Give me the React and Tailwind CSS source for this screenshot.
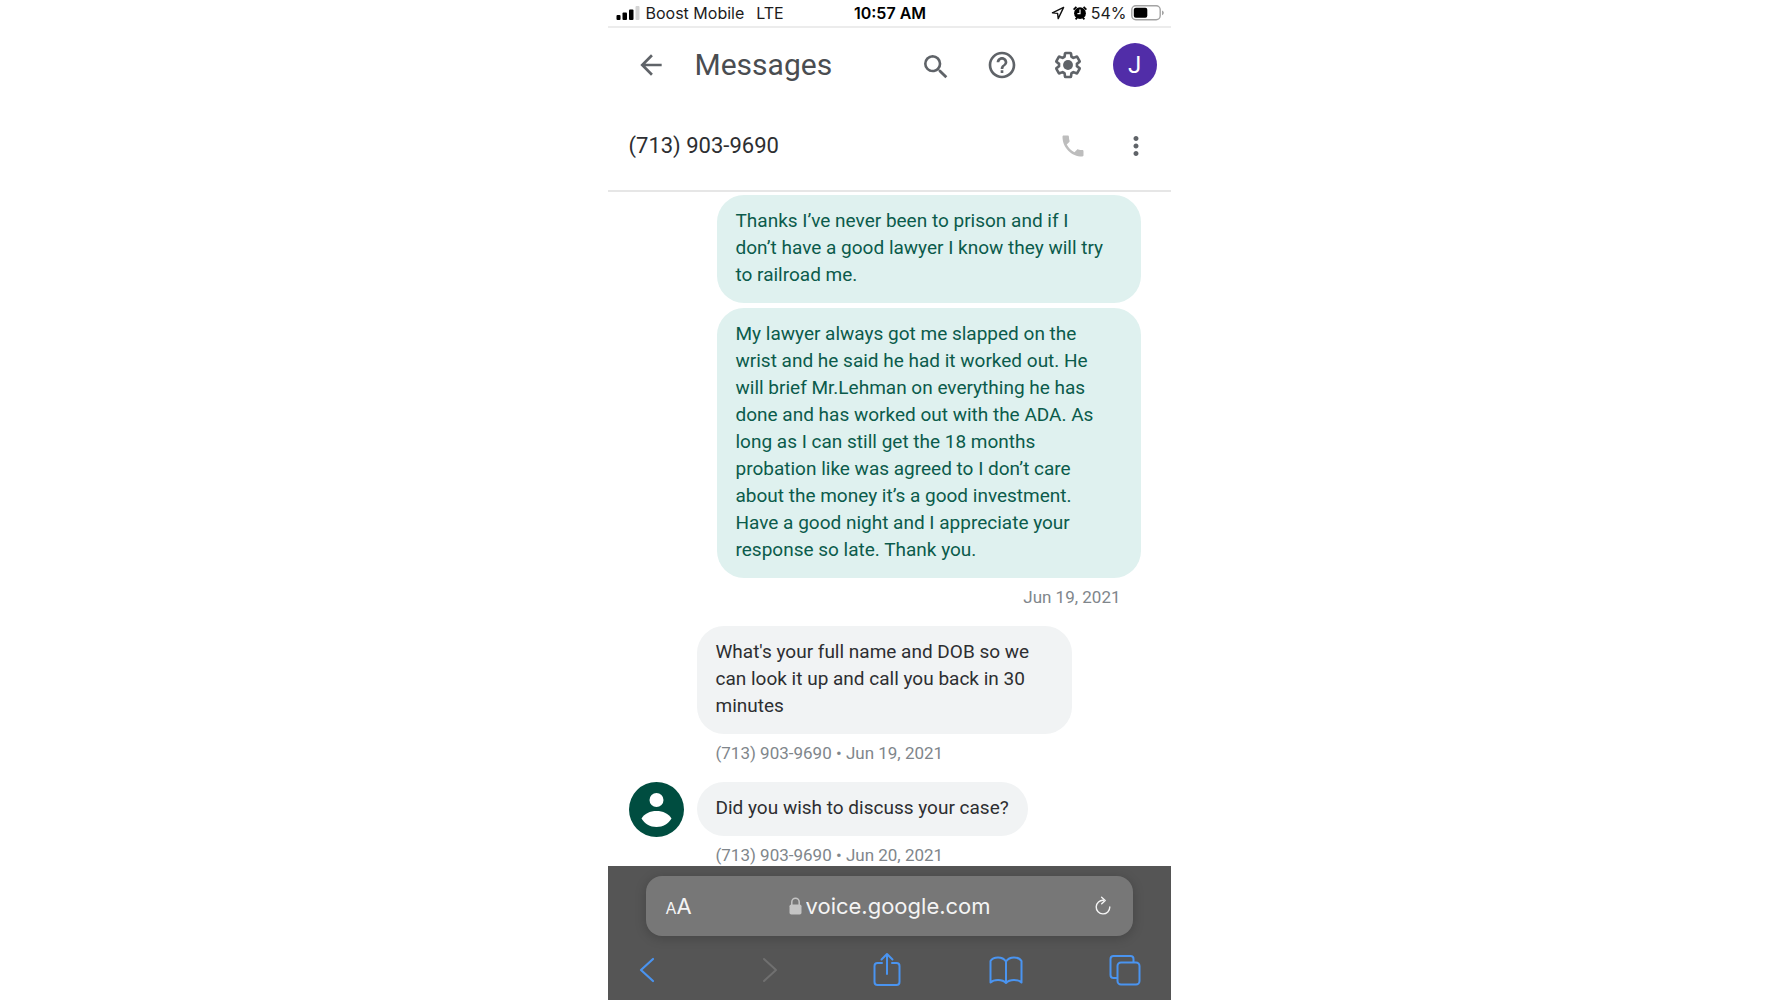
import { useState } from 'react';
import { MdArrowBack, MdSearch, MdHelpOutline, MdPhone, MdMoreVert } from 'react-icons/md';

const CONTACT = '(713) 903-9690';

const messages = [
  {
    id: 1,
    mine: true,
    text: 'Thanks I’ve never been to prison and if I don’t have a good lawyer I know they will try to railroad me.',
  },
  {
    id: 2,
    mine: true,
    text: 'My lawyer always got me slapped on the wrist and he said he had it worked out. He will brief Mr.Lehman on everything he has done and has worked out with the ADA. As long as I can still get the 18 months probation like was agreed to I don’t care about the money it’s a good investment. Have a good night and I appreciate your response so late. Thank you.',
    date: 'Jun 19, 2021',
  },
  {
    id: 3,
    mine: false,
    text: "What's your full name and DOB so we can look it up and call you back in 30 minutes",
    date: 'Jun 19, 2021',
  },
  {
    id: 4,
    mine: false,
    avatar: true,
    text: 'Did you wish to discuss your case?',
    date: 'Jun 20, 2021',
  },
];

function StatusBar() {
  return (
    <div className="grid h-7 shrink-0 grid-cols-[1fr_auto_1fr] items-center border-b-2 border-[#ececec] pl-2 pr-[6px] font-['Inter',sans-serif] text-base leading-none text-[#1c1c1c]">
      <div className="flex items-center">
        <svg className="mr-[6px] h-[14px] w-6" viewBox="0 0 24 14">
          <rect x="0.5" y="9" width="4" height="5" rx="1" fill="#000" />
          <rect x="6.5" y="6.5" width="4.5" height="7.5" rx="1" fill="#000" />
          <rect x="13" y="3.5" width="4.5" height="10.5" rx="1" fill="#000" />
          <rect x="19.5" y="0" width="4" height="14" rx="1" fill="#d4d4d4" />
        </svg>
        <span>Boost Mobile</span>
        <span className="ml-3">LTE</span>
      </div>
      <span className="font-semibold text-black">10:57 AM</span>
      <div className="flex items-center justify-end">
        <svg className="mr-2 h-[14px] w-[14px]" viewBox="0 0 14 14" fill="none" stroke="#111" strokeWidth="1.4" strokeLinejoin="round">
          <path d="M12.6 1.4 1.4 6.8l5.2.6.6 5.2z" />
        </svg>
        <svg className="mr-1 h-[14px] w-[14px]" viewBox="0 0 14 14">
          <circle cx="7" cy="7.2" r="5.9" fill="#000" />
          <path d="M.6 3.6 3.4.9M13.4 3.6 10.6.9M2.6 13.3l1.6-1.8M11.4 13.3l-1.6-1.8" stroke="#000" strokeWidth="1.8" />
          <path d="M7 3.6v4H4.4" stroke="#fff" strokeWidth="1.2" fill="none" />
        </svg>
        <span className="mr-1">54%</span>
        <svg className="h-4 w-[34px]" viewBox="0 0 34 16">
          <rect x="0.8" y="0.8" width="28.4" height="14" rx="4" fill="none" stroke="#a3a3a3" strokeWidth="1.4" />
          <rect x="2.8" y="2.8" width="13.5" height="10" rx="2" fill="#000" />
          <path d="M31 5.4v4.8c1.2-.4 1.8-1.3 1.8-2.4s-.6-2-1.8-2.400z" fill="#a3a3a3" />
        </svg>
      </div>
    </div>
  );
}

function GearIcon() {
  return (
    <svg className="h-8 w-8" viewBox="0 0 24 24">
      <g transform="translate(1.2 1.2) scale(0.9)">
        <path
          fill="none"
          stroke="currentColor"
          strokeWidth="2.2"
          strokeLinejoin="round"
          d="M19.43 12.98c.04-.32.07-.64.07-.98s-.03-.66-.07-.98l2.11-1.65c.19-.15.24-.42.12-.64l-2-3.46a.5.5 0 0 0-.61-.22l-2.49 1c-.52-.4-1.08-.73-1.69-.98l-.38-2.65A.488.488 0 0 0 14 2h-4c-.25 0-.46.18-.49.42l-.38 2.65c-.61.25-1.17.59-1.69.98l-2.49-1a.5.5 0 0 0-.61.22l-2 3.46c-.13.22-.07.49.12.64l2.11 1.65c-.04.32-.07.65-.07.98s.03.66.07.98l-2.11 1.65c-.19.15-.24.42-.12.64l2 3.46a.5.5 0 0 0 .61.22l2.49-1c.52.4 1.08.73 1.69.98l.38 2.65c.03.24.24.42.49.42h4c.25 0 .46-.18.49-.42l.38-2.65c.61-.25 1.17-.59 1.69-.98l2.49 1a.5.5 0 0 0 .61-.22l2-3.46c.12-.22.07-.49-.12-.64z"
        />
      </g>
      <circle cx="12" cy="12" r="3.7" fill="currentColor" />
    </svg>
  );
}

function Header() {
  return (
    <header className="flex h-[74px] shrink-0 items-center pl-[27px] pr-[2px] text-[#5f6368]">
      <button type="button" aria-label="Back" className="mr-7">
        <MdArrowBack className="h-8 w-8" />
      </button>
      <h1 className="flex-1 font-['Roboto',sans-serif] text-[30px] leading-9 text-[#4a4d51]">Messages</h1>
      <button type="button" aria-label="Search" className="flex w-[66px] justify-center pt-1">
        <MdSearch className="h-8 w-8" />
      </button>
      <button type="button" aria-label="Help" className="flex w-[66px] justify-center">
        <MdHelpOutline className="h-8 w-8" />
      </button>
      <button type="button" aria-label="Settings" className="flex w-[66px] justify-center">
        <GearIcon />
      </button>
      <button type="button" aria-label="Account" className="flex w-[68px] justify-center">
        <span className="flex h-11 w-11 items-center justify-center rounded-full bg-[#512da8] font-['Roboto',sans-serif] text-2xl text-white">
          J
        </span>
      </button>
    </header>
  );
}

function ContactBar() {
  return (
    <div className="flex h-[90px] shrink-0 items-center border-b-2 border-[#e6e6e6] pl-[21px] pr-[2px]">
      <h2 className="flex-1 text-[22px] leading-7 text-[#2d2e31]">{CONTACT}</h2>
      <button type="button" aria-label="Call" className="flex w-[60px] justify-center text-[#bdbdbd]" disabled>
        <MdPhone className="h-7 w-7" />
      </button>
      <button type="button" aria-label="More options" className="flex w-[66px] justify-center text-[#5f6368]">
        <MdMoreVert className="h-[30px] w-[30px]" />
      </button>
    </div>
  );
}

function ContactAvatar() {
  return (
    <svg className="h-[55px] w-[55px]" viewBox="0 0 55 55">
      <circle cx="27.5" cy="27.5" r="27.5" fill="#004d40" />
      <circle cx="27.5" cy="18" r="7" fill="#fff" />
      <path d="M12.500 36.500c3-5 8.500-7.500 15-7.500s12 2.500 15 7.500c-3 5-8.500 8.500-15 8.500s-12-3.500-15-8.500z" fill="#fff" />
    </svg>
  );
}

function Message({ message }) {
  const { mine, avatar, text, date } = message;

  if (mine) {
    return (
      <li className="flex flex-col items-end pr-[30px]">
        <p className="max-w-[424px] rounded-[27px] bg-[#dff1ef] pt-3 pr-9 pb-[15px] pl-[19px] text-[19px] leading-[27px] text-[#0b5b4b]">
          {text}
        </p>
        {date && <time className="mt-[7px] mb-3 pr-5 text-[17px] leading-6 text-[#80868b]">{date}</time>}
      </li>
    );
  }

  return (
    <li className="flex pl-[21px]">
      <div className="w-[68px] shrink-0">{avatar && <ContactAvatar />}</div>
      <div className="flex flex-col items-start">
        <p className="max-w-[375px] rounded-[27px] bg-[#f1f3f4] px-[19px] pt-3 pb-[15px] text-[19px] leading-[27px] text-[#2d2e31]">
          {text}
        </p>
        <p className="mt-[7px] mb-3 pl-[19px] text-[17px] leading-6 text-[#80868b]">
          {CONTACT} • <time>{date}</time>
        </p>
      </div>
    </li>
  );
}

function BrowserBar() {
  const [url, setUrl] = useState('voice.google.com');

  return (
    <footer className="shrink-0 bg-[#555] px-[38px] pt-[10px] pb-[10px] font-['Inter',sans-serif]">
      <div className="flex h-[60px] items-center rounded-2xl bg-[#777] px-5 text-[#f4f4f4] shadow-[0_2px_12px_rgba(0,0,0,0.2)]">
        <button type="button" aria-label="Page settings" className="w-10 text-left">
          <span className="text-base">A</span>
          <span className="text-[22px]">A</span>
        </button>
        <div className="flex flex-1 items-center justify-center gap-1">
          <svg className="h-[18px] w-[13px] shrink-0" viewBox="0 0 13 18">
            <rect x="0.5" y="7.5" width="12" height="10" rx="1.8" fill="#c4c4c4" />
            <path d="M2.800 8V5a3.700 3.700 0 0 1 7.400 0v3" fill="none" stroke="#c4c4c4" strokeWidth="1.5" />
          </svg>
          <input
            type="text"
            aria-label="Address"
            value={url}
            onChange={(e) => setUrl(e.target.value)}
            className="w-[184px] bg-transparent text-[22px] leading-7 outline-none"
          />
        </div>
        <button type="button" aria-label="Reload" className="flex w-10 justify-end">
          <svg className="h-5 w-5" viewBox="0 0 20 20" fill="none" stroke="currentColor" strokeWidth="1.4" strokeLinecap="round" strokeLinejoin="round">
            <path d="M10.500 4.300a6.800 6.800 0 1 0 6.300 6.700" />
            <path d="M8.600 1.300l3.600 3.200-3.500 3.300" />
          </svg>
        </button>
      </div>

      <nav className="-mx-2 mt-[14px] flex h-10 items-center justify-between text-[#4a94f0]">
        <button type="button" aria-label="Previous page">
          <svg className="h-9 w-8" viewBox="0 0 32 36" fill="none" stroke="currentColor" strokeWidth="2.2" strokeLinecap="round" strokeLinejoin="round">
            <path d="M15 7 3 18l12 11" />
          </svg>
        </button>
        <button type="button" aria-label="Next page" className="text-[#707070]" disabled>
          <svg className="h-9 w-8" viewBox="0 0 32 36" fill="none" stroke="currentColor" strokeWidth="2" strokeLinecap="round" strokeLinejoin="round">
            <path d="M9 7l12 11L9 29" />
          </svg>
        </button>
        <button type="button" aria-label="Share">
          <svg className="h-9 w-8" viewBox="0 0 32 36" fill="none" stroke="currentColor" strokeWidth="2" strokeLinecap="round" strokeLinejoin="round">
            <path d="M10 11H5.500a3 3 0 0 0-3 3v16a3 3 0 0 0 3 3h19a3 3 0 0 0 3-3V14a3 3 0 0 0-3-3H20" />
            <path d="M15 22V2.500M9.500 7.500 15 2l5.500 5.500" />
          </svg>
        </button>
        <button type="button" aria-label="Bookmarks">
          <svg className="h-9 w-[34px]" viewBox="0 0 34 36" fill="none" stroke="currentColor" strokeWidth="2" strokeLinejoin="round">
            <path d="M17 9.500C15 6.500 12 5.500 9 5.500S3 6.500 1.500 9v21.500C3.500 28.500 6 28 9 28s6 .8 8 3c2-2.200 5-3 8-3s5.500.5 7.500 2.500V9C31 6.500 28 5.500 25 5.500s-6 1-8 4zV31" />
          </svg>
        </button>
        <button type="button" aria-label="Tabs">
          <svg className="h-9 w-8" viewBox="0 0 32 36" fill="none" stroke="currentColor" strokeWidth="2" strokeLinejoin="round">
            <path d="M8.500 26H4.500a3 3 0 0 1-3-3V7a3 3 0 0 1 3-3h17a3 3 0 0 1 3 3v3.500" />
            <rect x="8.5" y="10.5" width="22" height="22" rx="3.5" />
          </svg>
        </button>
      </nav>
    </footer>
  );
}

export default function App() {
  return (
    <div className="h-screen bg-white">
      <main className="mx-auto flex h-full w-full max-w-[563px] flex-col font-['Roboto',sans-serif]">
        <StatusBar />
        <Header />
        <ContactBar />
        <ul className="flex min-h-0 flex-1 flex-col gap-[5px] overflow-hidden pt-[3px]">
          {messages.map((m) => (
            <Message key={m.id} message={m} />
          ))}
        </ul>
        <BrowserBar />
      </main>
    </div>
  );
}
